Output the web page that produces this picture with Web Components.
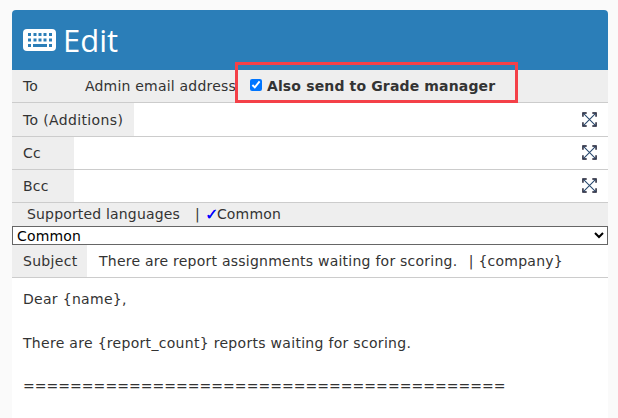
<!DOCTYPE html>
<html><head><meta charset="utf-8">
<style>
html,body{margin:0;padding:0;background:#fafafa;overflow:hidden;height:418px}
body{font-family:"DejaVu Sans",sans-serif;font-size:14px;color:#333}
</style></head><body>
<mail-panel>
  <panel-head slot="head">Edit</panel-head>
  <mail-row label="To" lw="61" ls=".2" plain>Admin email address<grade-check>Also send to Grade manager</grade-check></mail-row>
  <mail-row label="To (Additions)" lw="122" ls=".36" h="34" expand></mail-row>
  <mail-row label="Cc" lw="62" expand></mail-row>
  <mail-row label="Bcc" lw="62" expand></mail-row>
  <lang-bar></lang-bar>
  <mail-row label="Subject" lw="75" ls=".3" subject><span>There are report assignments waiting for scoring. &nbsp;</span><span style="margin-left:2px">| {company}</span></mail-row>
  <mail-body></mail-body>
</mail-panel>
<script>
function def(name, html){
  customElements.define(name, class extends HTMLElement{
    constructor(){super();const r=this.attachShadow({mode:'open'});r.innerHTML=typeof html==='function'?html(this):html;}
  });
}
def('mail-panel',`<style>
:host{display:block;box-sizing:border-box;width:596px;margin:10px 0 0 12px;background:#fff;border-radius:4px 4px 0 0;height:408px;overflow:hidden}
</style><slot name="head"></slot><slot></slot>`);
def('panel-head',`<style>
:host{display:flex;align-items:center;gap:7px;height:60px;box-sizing:border-box;padding:0 0 0 11px;background:#2b7eb8;color:#fff;font:31px/1 "Open Sans",sans-serif}
svg{width:33px;height:22px;display:block}
</style><svg viewBox="0 0 33 22"><rect width="33" height="22" rx="4" fill="#fff"/><g fill="#2b7eb8"><rect x="5" y="4" width="3" height="3"/><rect x="10.5" y="4" width="3" height="3"/><rect x="15.500" y="4" width="3" height="3"/><rect x="20.500" y="4" width="3" height="3"/><rect x="26" y="4" width="3" height="3"/><rect x="5" y="9.500" width="3" height="3"/><rect x="10.500" y="9.500" width="3" height="3"/><rect x="15.500" y="9.500" width="3" height="3"/><rect x="20.500" y="9.500" width="3" height="3"/><rect x="26" y="9.500" width="3" height="3"/><rect x="5" y="15" width="3" height="3"/><rect x="10" y="15" width="14" height="3"/><rect x="26" y="15" width="3" height="3"/></g></svg><slot></slot>`);
const ICON=`<svg viewBox="0 0 16 16" width="15" height="15" fill="none"><path d="M1 5V1h4M11 1h4v4M15 11v4h-4M5 15H1v-4" stroke="#141428" stroke-width="1.500"/><path d="M1.500 1.500l13 13M14.500 1.500l-13 13" stroke="#27486e" stroke-width="1.100"/></svg>`;
def('mail-row',el=>{
  const lw=el.getAttribute('lw');
  const plain=el.hasAttribute('plain'),subj=el.hasAttribute('subject'),exp=el.hasAttribute('expand');
  const ls=el.getAttribute('ls')||'.2';
  return `<style>
:host{display:flex;align-items:center;height:${el.getAttribute('h')||33}px;box-sizing:border-box;border-bottom:1px solid #ccc;background:${plain?'#eee':'#fff'};letter-spacing:${subj?'.24':ls}px}
.l{align-self:stretch;display:flex;align-items:center;box-sizing:border-box;width:${lw}px;padding-left:11px;background:#eee;white-space:nowrap;flex:none;letter-spacing:${ls}px}
.v{flex:1;display:flex;align-items:center;white-space:pre;padding-left:${plain||subj?12:0}px}
.x{margin:0 11px 1px 0;display:flex}
</style><div class="l">${el.getAttribute('label')}</div><div class="v"><slot></slot></div>${exp?`<div class="x">${ICON}</div>`:''}`;
});
def('grade-check',`<style>
:host{display:inline-flex;align-items:center;position:relative;margin-left:14px;font-weight:700;color:#333;letter-spacing:.15px}
input{margin:0 5px 0 0;width:12px;height:12px;accent-color:#0075ff;position:relative;top:-1px}
.box{position:absolute;left:-15px;top:-16px;width:283px;height:41px;box-sizing:border-box;border:3px solid #f44048;pointer-events:none}
</style><input type="checkbox" checked><slot></slot><div class="box"></div>`);
def('lang-bar',`<style>
:host{display:block;background:#eee;letter-spacing:.17px}
.t{height:22px;margin-bottom:1px;display:flex;align-items:center;padding-left:15px;white-space:pre;box-sizing:border-box}
.p{margin-left:15px}
i{font-style:normal;color:#00f;font-size:16px;font-weight:400;margin-left:5px;width:12px;letter-spacing:0;text-shadow:.4px 0 #00f}
select{display:block;width:100%;height:19px;box-sizing:border-box;margin:0;padding:0;border:1px solid #666;border-radius:0;background:#fff;color:#000;font:14px "DejaVu Sans",sans-serif;letter-spacing:.17px}
</style><div class="t"><span>Supported languages</span><span class="p">|</span><i>✓</i><span>Common</span></div><select><option>Common</option></select>`);
def('mail-body',`<style>
:host{display:block;padding:11px 11px;line-height:21.75px;white-space:pre;color:#333;letter-spacing:.3px}
p{margin:0}
.e{letter-spacing:.04px}
</style><p>Dear {name},</p><p>&nbsp;</p><p>There are {report_count} reports waiting for scoring.</p><p>&nbsp;</p><p class="e">=========================================</p>`);
</script>
</body></html>
